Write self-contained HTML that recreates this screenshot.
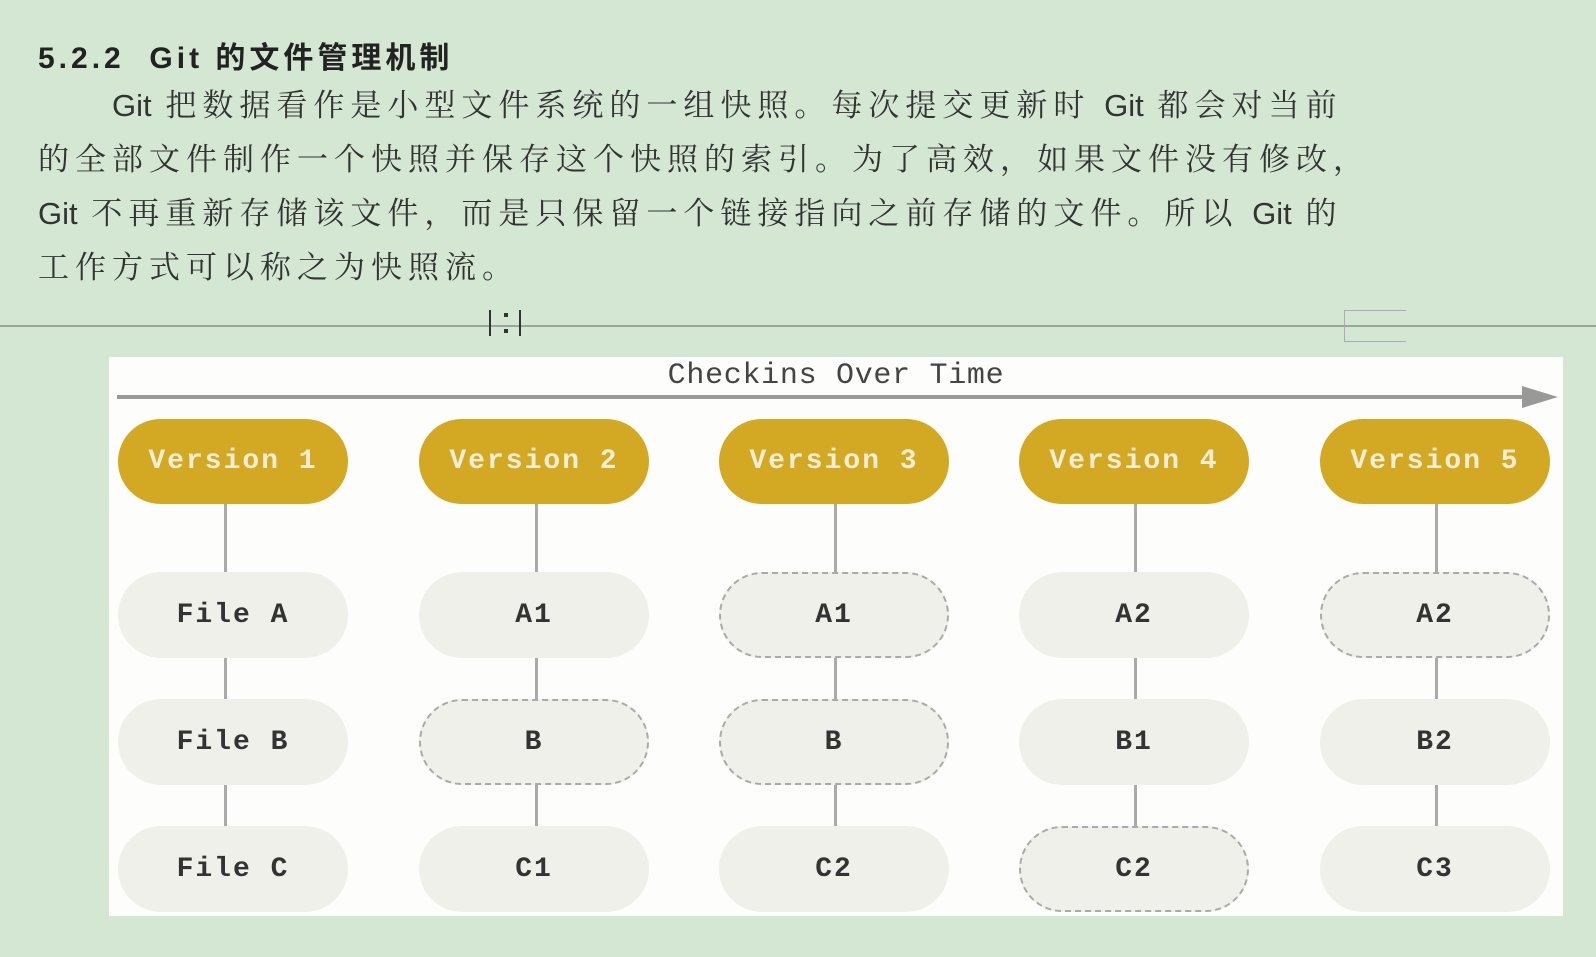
<!DOCTYPE html>
<html><head><meta charset="utf-8"><style>
*{margin:0;padding:0;box-sizing:border-box}
body{width:1596px;height:957px;background:#d4e7d3;position:relative;overflow:hidden;font-family:"Liberation Serif","Noto Serif CJK SC",serif}
.h{position:absolute;left:38px;top:33px;font:bold 30px "Liberation Sans","Noto Sans CJK SC",sans-serif;color:#222;letter-spacing:4px}
.p{position:absolute;left:38px;top:79px;width:1500px;font-size:31px;line-height:54px;color:#333;letter-spacing:6px;white-space:nowrap}
.p span{font-family:"Liberation Sans",sans-serif;letter-spacing:0}
.hr{position:absolute;left:0;top:325px;width:1596px;height:2px;background:#9aa69a}
.box{position:absolute;left:109px;top:357px;width:1454px;height:559px;background:#fdfdfb}
.m{font-family:"Liberation Mono","DejaVu Sans Mono",monospace}
.t{position:absolute;left:109px;width:1454px;top:359px;text-align:center;font-size:30px;color:#444;letter-spacing:0.7px}
.arr{position:absolute;left:117px;top:395px;width:1412px;height:4px;background:#999}
.ah{position:absolute;left:1522px;top:386px;width:0;height:0;border-left:36px solid #999;border-top:11px solid transparent;border-bottom:11px solid transparent}
.pill{position:absolute;width:230px;border-radius:43px;display:flex;align-items:center;justify-content:center;font-size:28px;font-family:"Liberation Mono","DejaVu Sans Mono",monospace;letter-spacing:2px}
.v{background:#d3a823;color:#f6eed4;height:85px;top:419px;font-weight:bold}
.f{background:#f0f0eb;color:#333;font-weight:bold;height:86px}
.d{border:2px dashed #aaa}
.ln{position:absolute;width:3px;background:#aaa}
</style></head><body>
<div class="h">5.2.2&nbsp; Git 的文件管理机制</div>
<div class="p">&emsp;&emsp;<span>Git</span> 把数据看作是小型文件系统的一组快照。每次提交更新时 <span>Git</span> 都会对当前<br>的全部文件制作一个快照并保存这个快照的索引。为了高效，如果文件没有修改，<br><span>Git</span> 不再重新存储该文件，而是只保留一个链接指向之前存储的文件。所以 <span>Git</span> 的<br>工作方式可以称之为快照流。</div>
<div class="hr"></div>
<div style="position:absolute;left:489px;top:310px;width:32px;height:26px;border-left:2px solid #333;border-right:2px solid #333"></div>
<div style="position:absolute;left:504px;top:313px;width:4px;height:4px;background:#333"></div>
<div style="position:absolute;left:504px;top:329px;width:4px;height:4px;background:#333"></div>
<div style="position:absolute;left:1344px;top:310px;width:62px;height:32px;border:1px solid #aab;border-right:none"></div>
<div class="box"></div>
<div class="t m">Checkins Over Time</div>
<div class="arr"></div><div class="ah"></div>

<div class="ln" style="left:224px;top:504px;height:400px"></div>
<div class="ln" style="left:535px;top:504px;height:400px"></div>
<div class="ln" style="left:834px;top:504px;height:400px"></div>
<div class="ln" style="left:1134px;top:504px;height:400px"></div>
<div class="ln" style="left:1435px;top:504px;height:400px"></div>

<div class="pill v" style="left:118px">Version 1</div>
<div class="pill v" style="left:419px">Version 2</div>
<div class="pill v" style="left:719px">Version 3</div>
<div class="pill v" style="left:1019px">Version 4</div>
<div class="pill v" style="left:1320px">Version 5</div>

<div class="pill f" style="left:118px;top:572px">File A</div>
<div class="pill f" style="left:118px;top:699px">File B</div>
<div class="pill f" style="left:118px;top:826px">File C</div>

<div class="pill f" style="left:419px;top:572px">A1</div>
<div class="pill f d" style="left:419px;top:699px">B</div>
<div class="pill f" style="left:419px;top:826px">C1</div>

<div class="pill f d" style="left:719px;top:572px">A1</div>
<div class="pill f d" style="left:719px;top:699px">B</div>
<div class="pill f" style="left:719px;top:826px">C2</div>

<div class="pill f" style="left:1019px;top:572px">A2</div>
<div class="pill f" style="left:1019px;top:699px">B1</div>
<div class="pill f d" style="left:1019px;top:826px">C2</div>

<div class="pill f d" style="left:1320px;top:572px">A2</div>
<div class="pill f" style="left:1320px;top:699px">B2</div>
<div class="pill f" style="left:1320px;top:826px">C3</div>
</body></html>
